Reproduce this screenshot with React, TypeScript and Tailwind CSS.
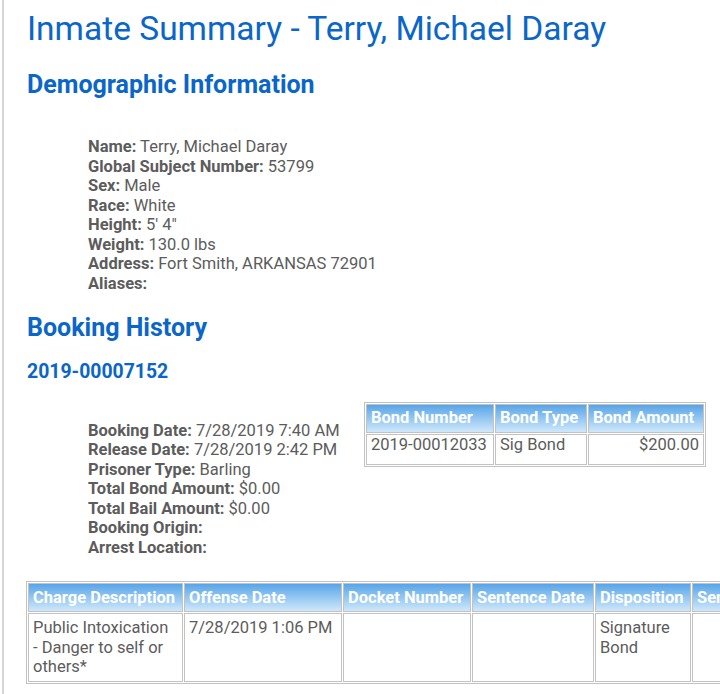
import React from 'react'

const demographics = [
  ['Name:', 'Terry, Michael Daray'],
  ['Global Subject Number:', '53799'],
  ['Sex:', 'Male'],
  ['Race:', 'White'],
  ['Height:', '5\' 4"'],
  ['Weight:', '130.0 lbs'],
  ['Address:', 'Fort Smith, ARKANSAS 72901'],
  ['Aliases:', ''],
]

const booking = [
  ['Booking Date:', '7/28/2019 7:40 AM'],
  ['Release Date:', '7/28/2019 2:42 PM'],
  ['Prisoner Type:', 'Barling'],
  ['Total Bond Amount:', '$0.00'],
  ['Total Bail Amount:', '$0.00'],
  ['Booking Origin:', ''],
  ['Arrest Location:', ''],
]

const th =
  'border border-[#c2c2c2] bg-gradient-to-b from-[#56a5e8] to-[#cfe8fa] px-[4px] h-[29px] text-left font-bold text-white whitespace-nowrap'
const td = 'border border-[#c2c2c2] bg-white px-[4px] align-top text-[#5c5c5c]'

function Details({ rows }: { rows: string[][] }) {
  return (
    <div className="pl-[61px] text-[16.5px] leading-[19.5px] text-[#5c5c5c]">
      {rows.map(([label, value]) => (
        <div key={label}>
          <span className="font-bold">{label}</span> {value}
        </div>
      ))}
    </div>
  )
}

export default function App() {
  return (
    <div
      className="min-h-screen overflow-hidden bg-white"
      style={{ fontFamily: 'Roboto, "Liberation Sans", sans-serif' }}
    >
      <div className="ml-[2px] min-h-screen border-l-2 border-[#d6d6d6] pl-[23px]">
        <h1 className="pt-[9px] text-[33.5px] leading-[39px] text-[#0a66c8]">
          Inmate Summary - Terry, Michael Daray
        </h1>

        {/* Demographics */}
        <h2 className="mt-[22px] text-[25px] font-bold leading-[29px] text-[#0a66c8]">
          Demographic Information
        </h2>
        <div className="mt-[38px]">
          <Details rows={demographics} />
        </div>

        {/* Booking history */}
        <h2 className="mt-[20px] text-[25px] font-bold leading-[29px] text-[#0a66c8]">
          Booking History
        </h2>
        <h3 className="mt-[19px] text-[19.4px] font-bold leading-[22.5px] text-[#0a66c8]">
          2019-00007152
        </h3>

        <div className="flex items-start">
          <div className="mt-[37px] w-[337px] shrink-0">
            <Details rows={booking} />
          </div>
          <table className="mt-[18px] border-separate border-spacing-[1px] border border-[#c2c2c2] text-[16.5px] leading-[19.5px]">
            <thead>
              <tr>
                <th className={`${th} w-[128px] px-[3px]`}>Bond Number</th>
                <th className={`${th} w-[92px] px-[3px]`}>Bond Type</th>
                <th className={`${th} w-[116px] px-[3px]`}>Bond Amount</th>
              </tr>
            </thead>
            <tbody>
              <tr className="h-[31px]">
                <td className={`${td} px-[3px] align-middle`}>2019-00012033</td>
                <td className={`${td} px-[3px] align-middle`}>Sig Bond</td>
                <td className={`${td} px-[3px] align-middle text-right`}>$200.00</td>
              </tr>
            </tbody>
          </table>
        </div>

        {/* Charges */}
        <table className="-ml-px mt-[24px] w-[820px] table-fixed border-separate border-spacing-[1px] border border-[#c2c2c2] text-[16.5px] leading-[19.5px]">
          <thead>
            <tr>
              <th className={`${th} w-[155px]`}>Charge Description</th>
              <th className={`${th} w-[158px]`}>Offense Date</th>
              <th className={`${th} w-[128px]`}>Docket Number</th>
              <th className={`${th} w-[122px]`}>Sentence Date</th>
              <th className={`${th} w-[96px]`}>Disposition</th>
              <th className={th}>Sentence Length</th>
            </tr>
          </thead>
          <tbody>
            <tr className="h-[69px]">
              <td className={`${td} pt-[4px]`}>
                Public Intoxication <span className="whitespace-nowrap">- Danger</span> to self or others*
              </td>
              <td className={`${td} pt-[4px]`}>7/28/2019 1:06 PM</td>
              <td className={td}></td>
              <td className={td}></td>
              <td className={`${td} pt-[4px]`}>Signature Bond</td>
              <td className={td}></td>
            </tr>
          </tbody>
        </table>
      </div>
    </div>
  )
}
